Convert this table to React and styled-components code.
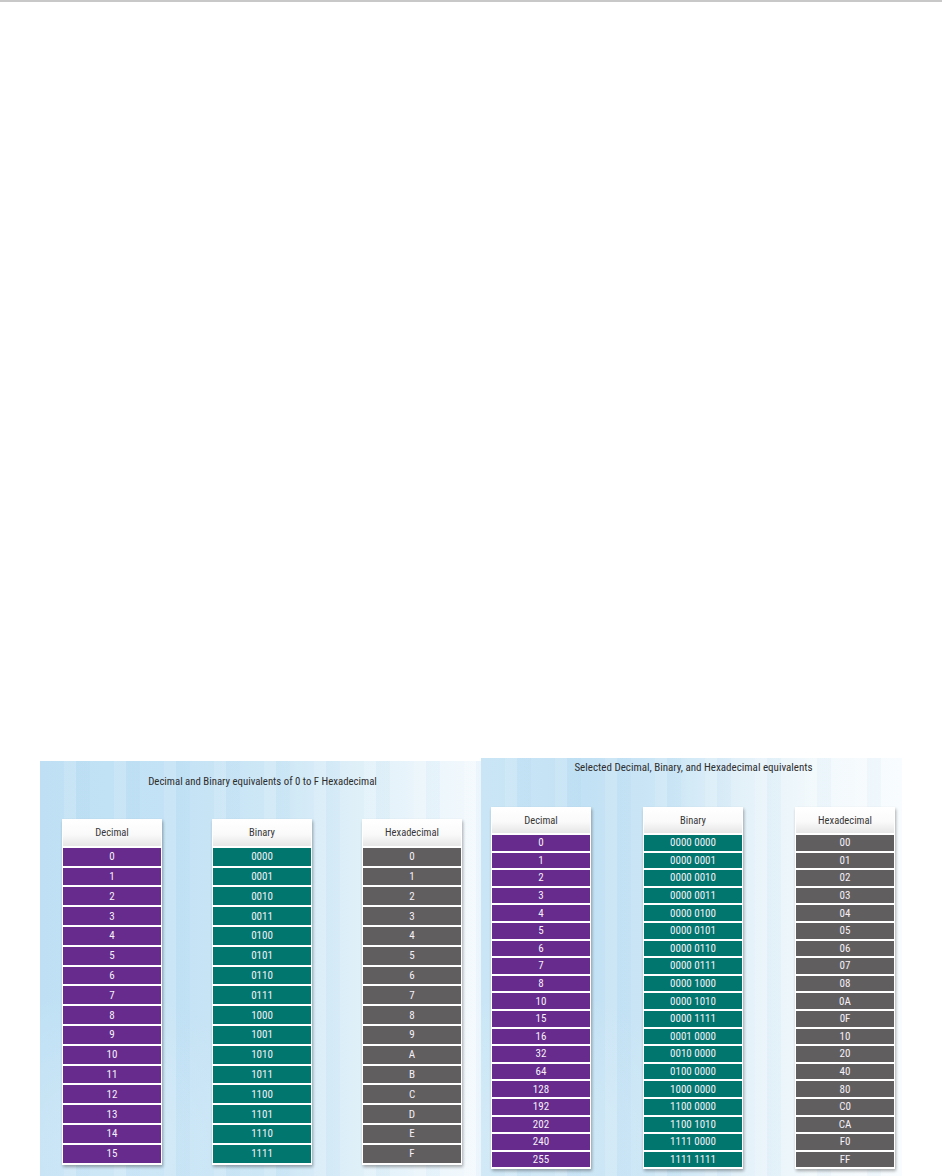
import React from 'react';
import styled, { createGlobalStyle } from 'styled-components';

const GlobalStyle = createGlobalStyle`
  html, body {
    margin: 0;
    padding: 0;
    background: #ffffff;
  }
  body {
    font-family: "Liberation Sans Narrow", "Roboto Condensed", "DejaVu Sans Condensed", "Liberation Sans", sans-serif;
  }
`;

const Page = styled.div`
  width: 942px;
  height: 1176px;
  overflow: hidden;
  border-top: 2px solid #c8c8c8;
  box-sizing: border-box;
`;

const Figures = styled.div`
  display: flex;
  align-items: flex-start;
  padding: 756px 0 0 40px;
`;

const Panel = styled.section`
  width: ${props => props.width}px;
  height: ${props => props.height}px;
  margin-top: ${props => props.offset || 0}px;
  box-sizing: border-box;
  display: flex;
  flex-direction: column;
  background:
    repeating-linear-gradient(90deg,
      rgba(255, 255, 255, 0) 0px,
      rgba(255, 255, 255, 0) 24px,
      rgba(255, 255, 255, 0.12) 24px,
      rgba(255, 255, 255, 0.12) 36px,
      rgba(140, 195, 232, 0.07) 36px,
      rgba(140, 195, 232, 0.07) 50px),
    radial-gradient(circle at 15% 92%, rgba(255, 255, 255, 0.25) 0, rgba(255, 255, 255, 0) 30%),
    ${props => props.fade};
`;

const Title = styled.h3`
  align-self: center;
  margin: ${props => props.top}px 0 0 ${props => props.nudge || 0}px;
  font-size: ${props => props.size}px;
  font-weight: normal;
  color: #2e2e2e;
  line-height: 1;
  white-space: nowrap;
`;

const Columns = styled.div`
  display: flex;
  gap: ${props => props.gap}px;
  margin-top: ${props => props.top}px;
  margin-left: ${props => props.left}px;
`;

const Column = styled.div`
  width: 98px;
  background: #ffffff;
  padding: 1px 1px 2px;
  display: flex;
  flex-direction: column;
  gap: 2px;
  box-shadow: 1px 2px 3px rgba(0, 0, 0, 0.32);
`;

const Header = styled.div`
  height: ${props => props.h}px;
  display: flex;
  align-items: center;
  justify-content: center;
  font-size: 10.5px;
  color: #383838;
  background: linear-gradient(#ffffff 0%, #fafafa 55%, #e6e6e6 100%);
`;

const Cell = styled.div`
  height: ${props => props.h}px;
  display: flex;
  align-items: center;
  justify-content: center;
  font-size: 11px;
  color: #f6f0f8;
  background: ${props => props.color};
`;

const COLORS = {
  dec: '#662b8c',
  bin: '#00766e',
  hex: '#605e5f',
};

const basic = Array.from({ length: 16 }, (_, i) => i);
const selected = [0, 1, 2, 3, 4, 5, 6, 7, 8, 10, 15, 16, 32, 64, 128, 192, 202, 240, 255];

const toBin4 = n => n.toString(2).padStart(4, '0');
const toBin8 = n => {
  const s = n.toString(2).padStart(8, '0');
  return s.slice(0, 4) + ' ' + s.slice(4);
};
const toHex = (n, len) => n.toString(16).toUpperCase().padStart(len, '0');

function Table({ rows, cellH, headH, gap, top, left }) {
  const cols = [
    { title: 'Decimal', key: 'dec', get: r => r.dec },
    { title: 'Binary', key: 'bin', get: r => r.bin },
    { title: 'Hexadecimal', key: 'hex', get: r => r.hex },
  ];
  return (
    <Columns gap={gap} top={top} left={left}>
      {cols.map(col => (
        <Column key={col.key}>
          <Header h={headH}>{col.title}</Header>
          {rows.map(r => (
            <Cell key={r.dec} h={cellH} color={COLORS[col.key]}>{col.get(r)}</Cell>
          ))}
        </Column>
      ))}
    </Columns>
  );
}

export default function App() {
  const leftRows = basic.map(n => ({ dec: n, bin: toBin4(n), hex: toHex(n, 1) }));
  const rightRows = selected.map(n => ({ dec: n, bin: toBin8(n), hex: toHex(n, 2) }));

  return (
    <>
      <GlobalStyle />
      <Page>
        <Figures>
          <Panel
            width={441}
            height={420}
            offset={3}
            fade="linear-gradient(90deg, #bfe0f4 0%, #c3e2f5 30%, #cfe8f6 55%, #e2f1f9 75%, #eef7fc 92%, #f3f9fd 100%)"
          >
            <Title top={16} size={10.8} nudge={4}>Decimal and Binary equivalents of 0 to F Hexadecimal</Title>
            <Table rows={leftRows} cellH={17.8} headH={26} gap={50} top={31} left={22} />
          </Panel>
          <Panel
            width={421}
            height={420}
            fade="linear-gradient(90deg, #cae6f6 0%, #c2e1f4 25%, #cde7f6 45%, #e3f1f9 62%, #f2f9fc 80%, #f8fcfe 100%)"
          >
            <Title top={4} size={11} nudge={4}>Selected Decimal, Binary, and Hexadecimal equivalents</Title>
            <Table rows={rightRows} cellH={15.6} headH={25} gap={52} top={34} left={10} />
          </Panel>
        </Figures>
      </Page>
    </>
  );
}
